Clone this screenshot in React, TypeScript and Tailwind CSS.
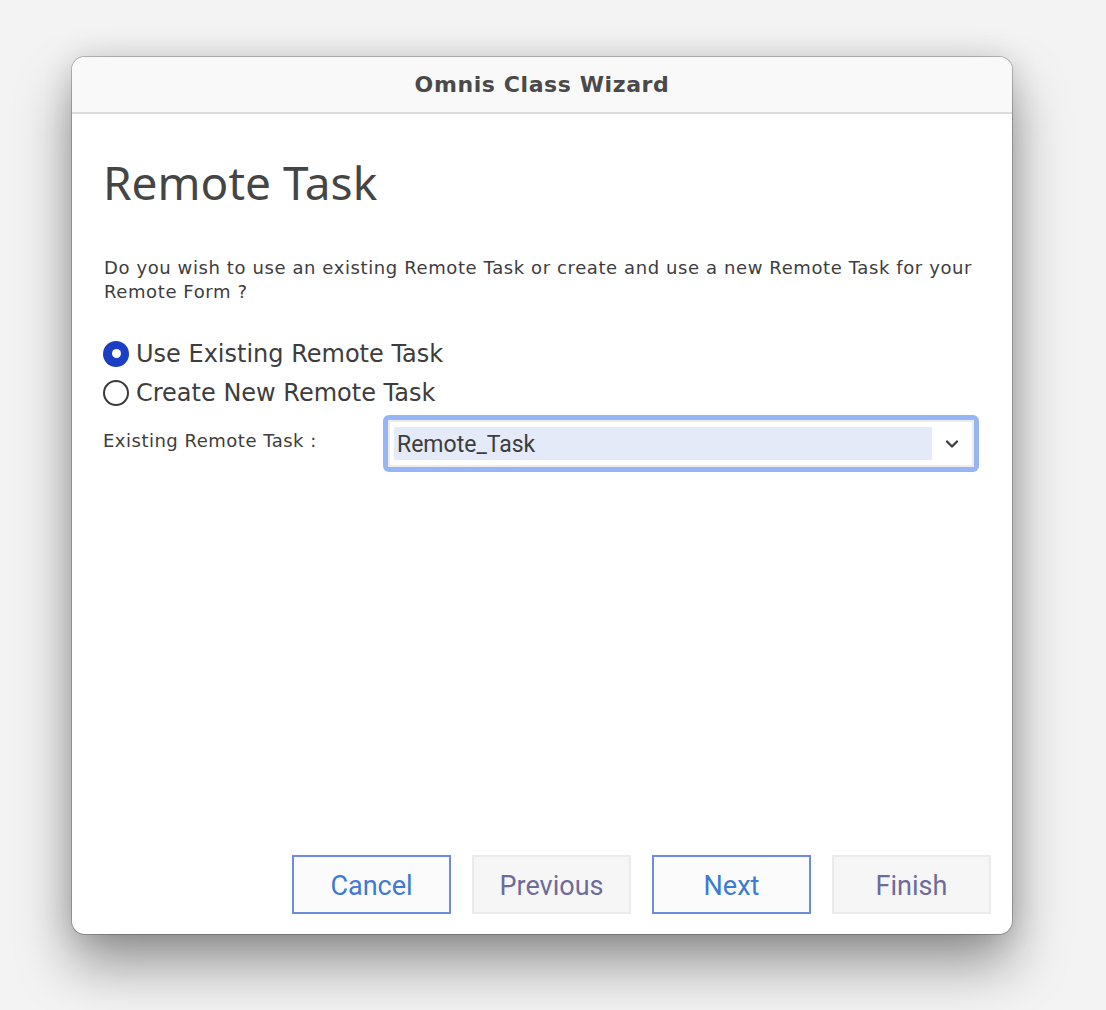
import { ChevronDown } from "lucide-react";

const noto = { fontFamily: '"Noto Sans", "Open Sans", Arial, sans-serif' };
const dejavu = { fontFamily: '"DejaVu Sans", Verdana, sans-serif' };
const roboto = { fontFamily: 'Roboto, "Liberation Sans", sans-serif' };

function Radio({ checked, label }: { checked: boolean; label: string }) {
  return (
    <label className="flex items-center gap-[7px] h-[39px]">
      {checked ? (
        <span className="w-[26px] h-[26px] rounded-full bg-[#1a3fc2] flex items-center justify-center">
          <span className="w-[9px] h-[9px] rounded-full bg-white" />
        </span>
      ) : (
        <span className="w-[26px] h-[26px] rounded-full border-2 border-[#3a3a3a] bg-white" />
      )}
      <span className="text-[24px] text-[#3d3d3d] leading-none" style={dejavu}>
        {label}
      </span>
    </label>
  );
}

function WizButton({ label, primary }: { label: string; primary?: boolean }) {
  return (
    <button
      type="button"
      className={
        primary
          ? "w-[159px] h-[59px] pt-[3px] border-2 border-[#6b8ddb] bg-[#fbfbfb] text-[#3b7bd4] text-[27px]"
          : "w-[159px] h-[59px] pt-[3px] border-2 border-[#ebebeb] bg-[#f6f6f6] text-[#6e6b9c] text-[27px]"
      }
      style={roboto}
    >
      {label}
    </button>
  );
}

export default function App() {
  return (
    <div className="w-[1106px] h-[1010px] bg-[#f3f3f3] pt-[57px] pl-[72px]" style={noto}>
      <div className="w-[940px] h-[877px] rounded-[13px] bg-white flex flex-col overflow-hidden shadow-[0_0_0_1px_rgba(0,0,0,0.22),0_30px_55px_rgba(0,0,0,0.4),0_0_30px_rgba(0,0,0,0.12)]">
        <div className="h-[57px] bg-[#f9f9f9] border-b-2 border-[#dcdcdc] flex items-center justify-center">
          <span className="text-[22px] font-bold text-[#4a4a4a] tracking-[0.6px]" style={dejavu}>
            Omnis Class Wizard
          </span>
        </div>
        <div className="flex-1 flex flex-col pl-[31px] pr-[20px]">
          <h1 className="mt-[38px] text-[46px] leading-[60px] text-[#454545]">Remote Task</h1>
          <p
            className="mt-[44px] ml-[1px] text-[18px] leading-[24px] text-[#3d3d3d] w-[880px] tracking-[0.6px]"
            style={dejavu}
          >
            Do you wish to use an existing Remote Task or create and use a new Remote Task for your Remote Form ?
          </p>
          <div className="mt-[30px] flex flex-col">
            <Radio checked label="Use Existing Remote Task" />
            <Radio checked={false} label="Create New Remote Task" />
          </div>
          <div className="mt-[3px] flex items-center">
            <span className="w-[280px] text-[18px] text-[#3d3d3d] -mt-[7px] tracking-[0.5px]" style={dejavu}>
              Existing Remote Task :
            </span>
            <div className="w-[596px] h-[57px] shrink-0 rounded-[6px] bg-[#95b5f5] p-[5px]">
              <div className="h-full bg-white border-2 border-[#ececec] flex items-center pl-[4px]">
                <div
                  className="flex-1 h-[33px] bg-[#e4eaf7] flex items-center pl-[3px] pt-[3px] text-[23px] text-[#3d3d3d]"
                  style={roboto}
                >
                  Remote_Task
                </div>
                <div className="w-[40px] flex items-center justify-center">
                  <ChevronDown size={20} strokeWidth={2.75} className="text-[#3d3d3d]" />
                </div>
              </div>
            </div>
          </div>
          <div className="flex-1" />
          <div className="flex justify-end gap-[21px] mb-[20px] pr-[1px]">
            <WizButton label="Cancel" primary />
            <WizButton label="Previous" />
            <WizButton label="Next" primary />
            <WizButton label="Finish" />
          </div>
        </div>
      </div>
    </div>
  );
}
